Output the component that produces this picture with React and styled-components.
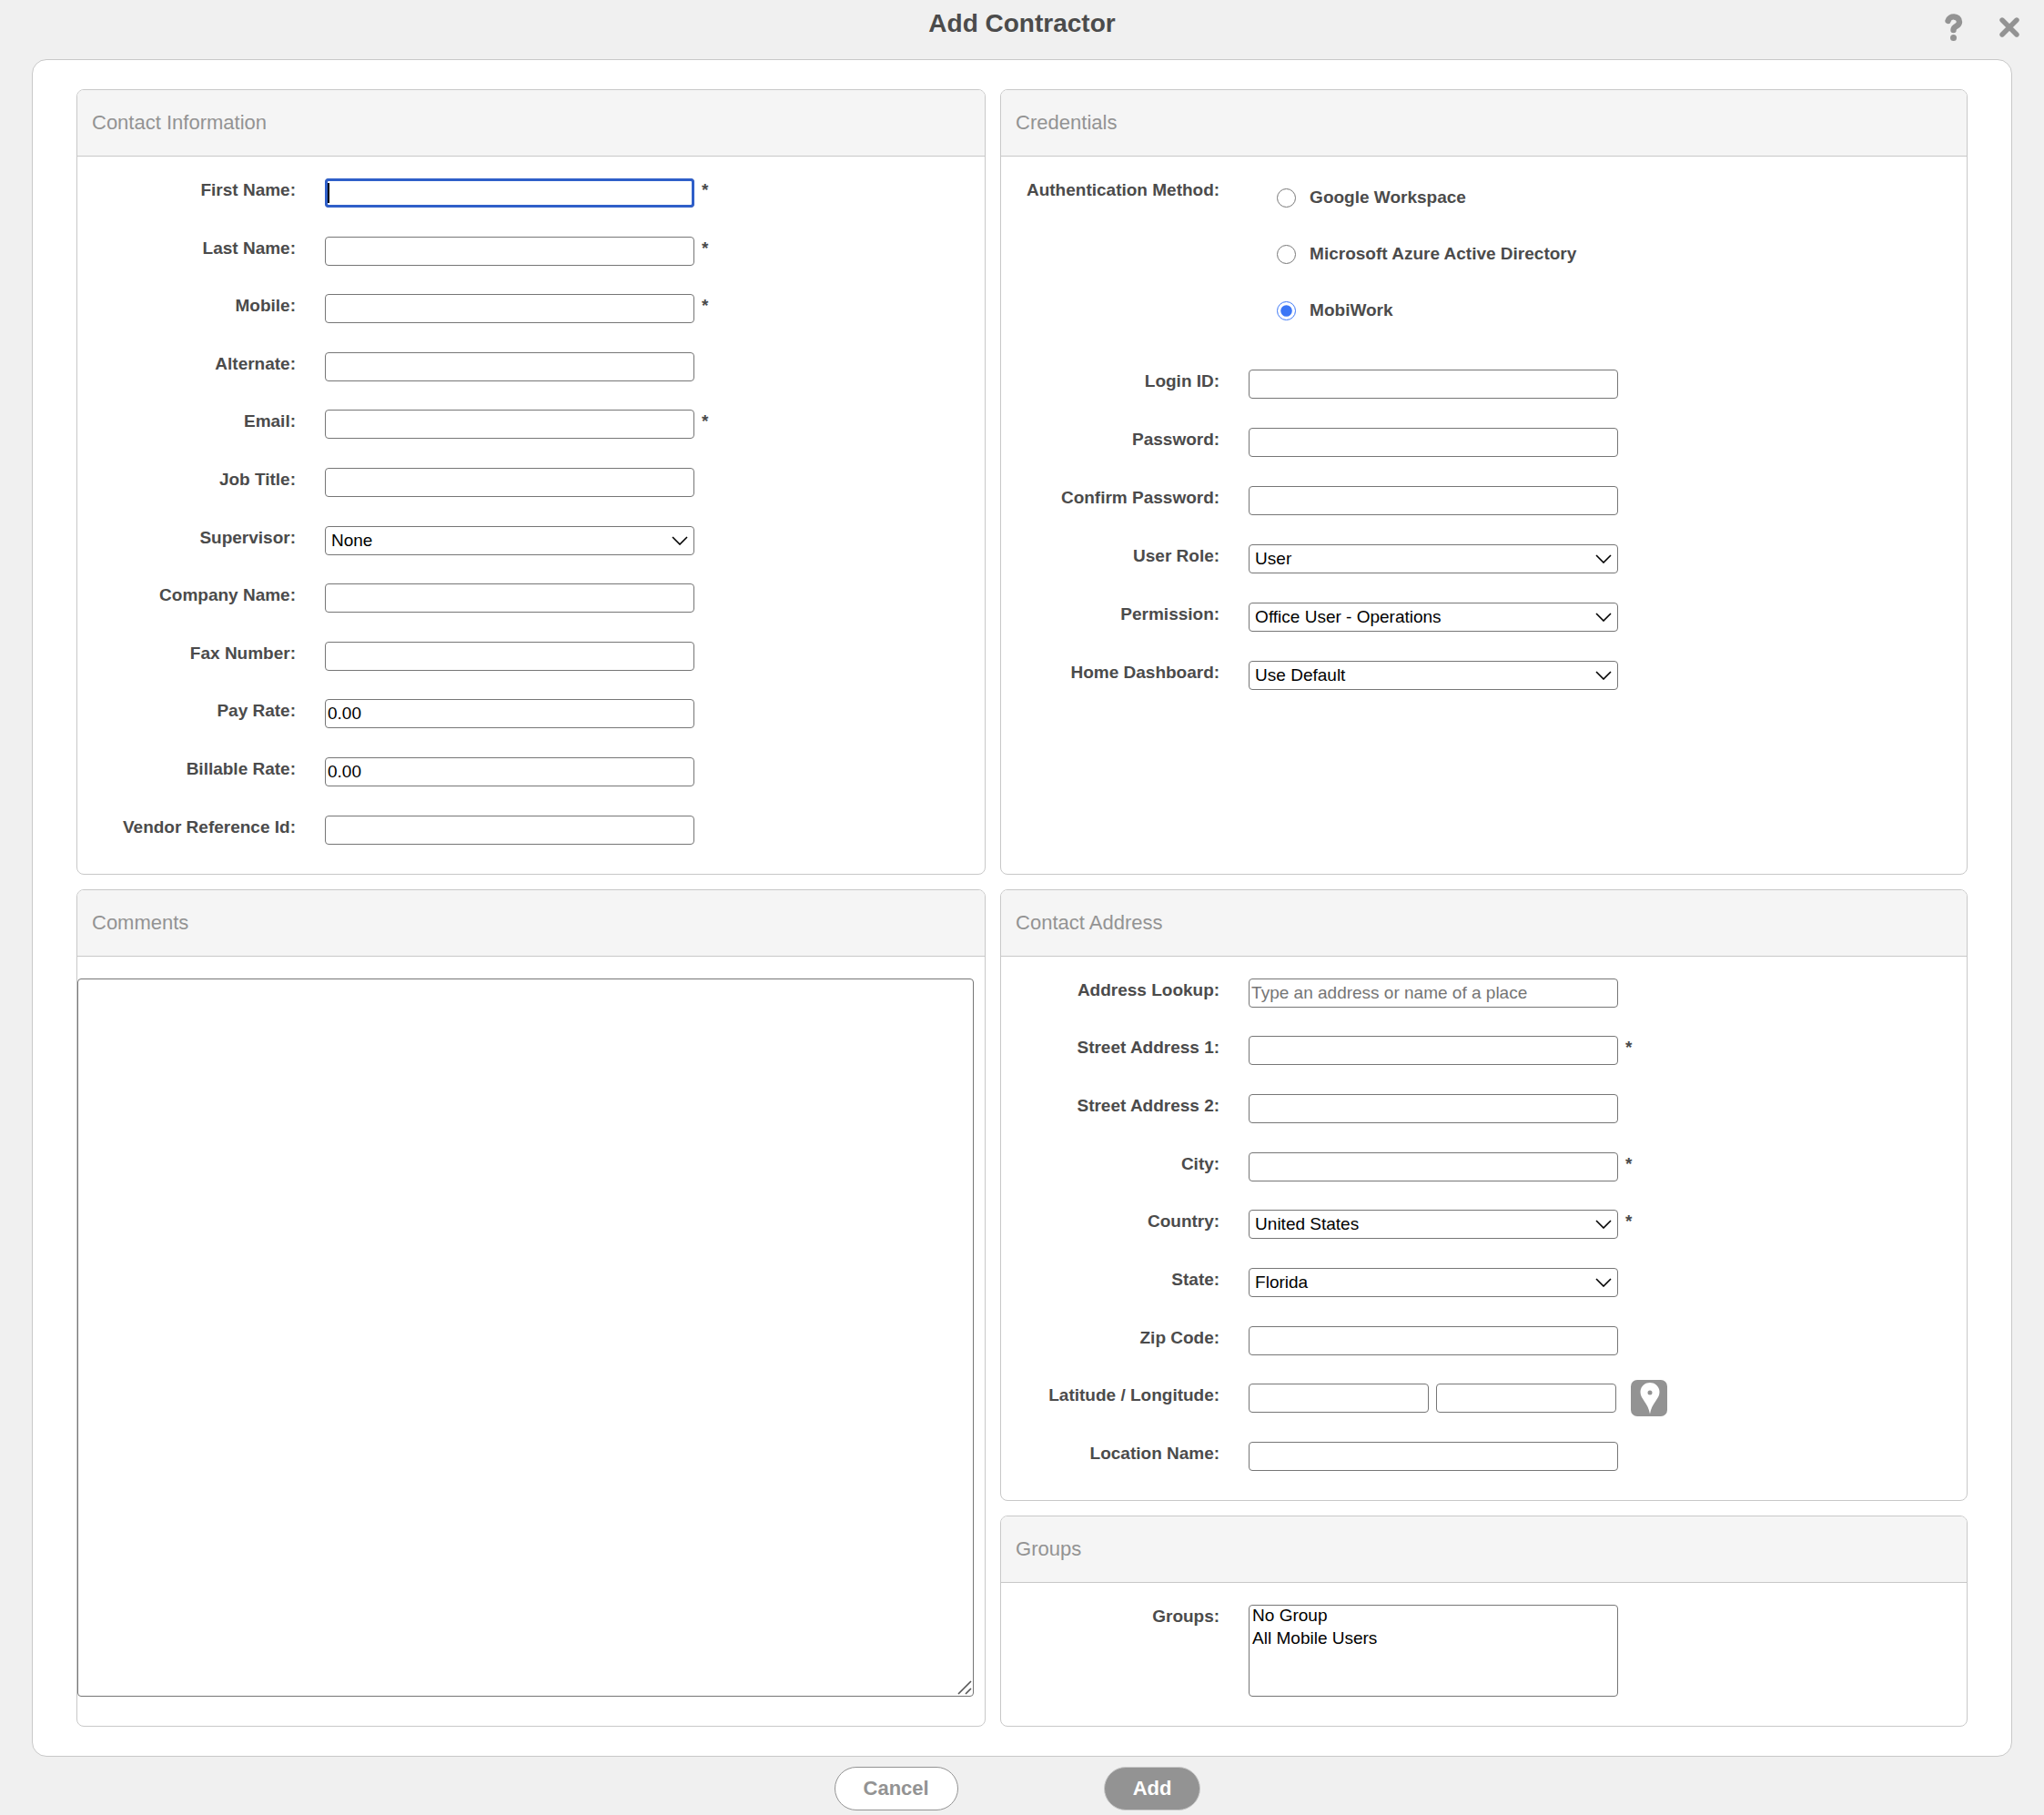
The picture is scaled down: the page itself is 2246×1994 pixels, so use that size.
import { useState } from 'react';
import styled, { createGlobalStyle } from 'styled-components';

const text = '#4b4b4b';
const gray = '#939393';
const line = '#c8c8c8';
const controlLine = '#767676';

const contactFields = [
  { id: 'firstName', label: 'First Name', required: true, focused: true },
  { id: 'lastName', label: 'Last Name', required: true },
  { id: 'mobile', label: 'Mobile', required: true },
  { id: 'alternate', label: 'Alternate' },
  { id: 'email', label: 'Email', required: true },
  { id: 'jobTitle', label: 'Job Title' },
  { id: 'supervisor', label: 'Supervisor', options: ['None'] },
  { id: 'companyName', label: 'Company Name' },
  { id: 'faxNumber', label: 'Fax Number' },
  { id: 'payRate', label: 'Pay Rate', value: '0.00' },
  { id: 'billableRate', label: 'Billable Rate', value: '0.00' },
  { id: 'vendorReferenceId', label: 'Vendor Reference Id' },
];

const credentialFields = [
  { id: 'loginId', label: 'Login ID' },
  { id: 'password', label: 'Password', type: 'password' },
  { id: 'confirmPassword', label: 'Confirm Password', type: 'password' },
  { id: 'userRole', label: 'User Role', options: ['User'] },
  { id: 'permission', label: 'Permission', options: ['Office User - Operations'] },
  { id: 'homeDashboard', label: 'Home Dashboard', options: ['Use Default'] },
];

const addressFields = [
  { id: 'addressLookup', label: 'Address Lookup', placeholder: 'Type an address or name of a place' },
  { id: 'street1', label: 'Street Address 1', required: true },
  { id: 'street2', label: 'Street Address 2' },
  { id: 'city', label: 'City', required: true },
  { id: 'country', label: 'Country', options: ['United States'], required: true },
  { id: 'state', label: 'State', options: ['Florida'] },
  { id: 'zipCode', label: 'Zip Code' },
];

const authMethods = ['Google Workspace', 'Microsoft Azure Active Directory', 'MobiWork'];

const Field = ({ id, label, type = 'text', value, placeholder, options, required, focused }) => (
  <Row>
    <Label htmlFor={id}>{label}:</Label>
    {options ? (
      <SelectBox>
        <Select id={id}>
          {options.map(option => (
            <option key={option}>{option}</option>
          ))}
        </Select>
        <Chevron viewBox='0 0 18 10' aria-hidden='true'>
          <path d='M1 1L9 9L17 1' />
        </Chevron>
      </SelectBox>
    ) : (
      <InputBox>
        <Input id={id} type={type} defaultValue={value} placeholder={placeholder || ' '} autoFocus={focused} />
        <Caret />
      </InputBox>
    )}
    {required && <Required>*</Required>}
  </Row>
);

const App = () => {
  const [authMethod, setAuthMethod] = useState('MobiWork');

  return (
    <Page onSubmit={e => e.preventDefault()}>
      <GlobalStyle />
      <TitleBar>
        <Title>Add Contractor</Title>
        <TitleActions>
          <IconButton type='button' aria-label='Help'>
            <svg width='20' height='30' viewBox='0 0 20 30'>
              <path
                d='M3.500 8C5 1.500 16 2 16 9C16 14.500 9.500 13 9.500 18'
                fill='none'
                stroke={gray}
                strokeWidth='6.400'
                strokeLinecap='round'
              />
              <circle cx='9.500' cy='26.500' r='3.500' fill={gray} />
            </svg>
          </IconButton>
          <IconButton type='button' aria-label='Close'>
            <svg width='22' height='22' viewBox='0 0 22 22'>
              <path d='M3 3L19 19M19 3L3 19' fill='none' stroke={gray} strokeWidth='5.400' strokeLinecap='round' />
            </svg>
          </IconButton>
        </TitleActions>
      </TitleBar>

      <Sheet>
        <Section>
          <SectionTitle>Contact Information</SectionTitle>
          <Fields $spread>
            {contactFields.map(field => (
              <Field key={field.id} {...field} />
            ))}
          </Fields>
        </Section>

        <Section>
          <SectionTitle>Credentials</SectionTitle>
          <Fields>
            <Row>
              <Label as='span' id='authLabel'>
                Authentication Method:
              </Label>
              <RadioGroup role='radiogroup' aria-labelledby='authLabel'>
                {authMethods.map(method => (
                  <RadioLabel key={method}>
                    <Radio
                      type='radio'
                      name='authMethod'
                      checked={authMethod === method}
                      onChange={() => setAuthMethod(method)}
                    />
                    {method}
                  </RadioLabel>
                ))}
              </RadioGroup>
            </Row>
            {credentialFields.map(field => (
              <Field key={field.id} {...field} />
            ))}
          </Fields>
        </Section>

        <Section>
          <SectionTitle id='commentsTitle'>Comments</SectionTitle>
          <CommentsBody>
            <Comments aria-labelledby='commentsTitle' />
            <Grip viewBox='0 0 16 16' aria-hidden='true'>
              <path d='M1 15L15 1M9 15L15 9' />
            </Grip>
          </CommentsBody>
        </Section>

        <Stack>
          <Section $grow>
            <SectionTitle>Contact Address</SectionTitle>
            <Fields $spread>
              {addressFields.map(field => (
                <Field key={field.id} {...field} />
              ))}
              <Row>
                <Label htmlFor='latitude'>Latitude / Longitude:</Label>
                <Coordinates>
                  <Input id='latitude' $short />
                  <Input aria-label='Longitude' $short />
                  <PinButton type='button' aria-label='Show on map'>
                    <svg width='40' height='40' viewBox='0 0 40 40'>
                      <rect width='40' height='40' rx='7' fill={gray} />
                      <path
                        fillRule='evenodd'
                        fill='#fff'
                        d='M21 3C15 3 10.500 7.500 10.500 13.500C10.500 21 19 25 21 37.500C23 25 31.500 21 31.500 13.500C31.500 7.500 27 3 21 3ZM21 11.500A2.500 2.500 0 1 1 21 16.500A2.500 2.500 0 1 1 21 11.500Z'
                      />
                    </svg>
                  </PinButton>
                </Coordinates>
              </Row>
              <Field id='locationName' label='Location Name' />
            </Fields>
          </Section>

          <Section>
            <SectionTitle>Groups</SectionTitle>
            <Fields>
              <Row>
                <Label htmlFor='groups'>Groups:</Label>
                <GroupList id='groups' multiple size={4}>
                  <option>No Group</option>
                  <option>All Mobile Users</option>
                </GroupList>
              </Row>
            </Fields>
          </Section>
        </Stack>
      </Sheet>

      <Footer>
        <Button type='button'>Cancel</Button>
        <Button type='submit' $primary>
          Add
        </Button>
      </Footer>
    </Page>
  );
};

export default App;

const GlobalStyle = createGlobalStyle`
  * {
    box-sizing: border-box;
  }
  body {
    margin: 0;
    color: ${text};
    background-color: #f0f0f0;
    font: 19px/26px 'Liberation Sans', Arial, sans-serif;
  }
  button, input, select, textarea {
    margin: 0;
    font: inherit;
  }
`;

const Page = styled.form`
  display: flex;
  flex-direction: column;
  min-height: 100vh;
`;

const TitleBar = styled.header`
  display: grid;
  grid-template-columns: 1fr auto 1fr;
  padding: 10px 27px 15px;
`;

const Title = styled.h1`
  grid-column: 2;
  margin: 0;
  font-size: 28px;
  line-height: 32px;
`;

const TitleActions = styled.div`
  display: flex;
  justify-content: flex-end;
  align-items: center;
  gap: 40px;
  height: 40px;
`;

const IconButton = styled.button`
  display: flex;
  padding: 0;
  border: 0;
  background: none;
  cursor: pointer;
`;

const Sheet = styled.main`
  display: grid;
  grid-template-columns: 47fr 50fr;
  grid-template-rows: 15fr 16fr;
  gap: 16px;
  flex: 1;
  margin: 0 35px;
  padding: 32px 48px;
  border: 1px solid ${line};
  border-radius: 16px;
  background-color: #fff;
`;

const Section = styled.section`
  display: flex;
  flex-direction: column;
  flex-grow: ${({ $grow }) => ($grow ? 1 : 0)};
  border: 1px solid ${line};
  border-radius: 8px;
  overflow: hidden;
`;

const Stack = styled.div`
  display: flex;
  flex-direction: column;
  gap: 16px;
`;

const SectionTitle = styled.h2`
  margin: 0;
  padding: 24px 16px;
  border-bottom: 1px solid ${line};
  background-color: #f5f5f5;
  color: ${gray};
  font-size: 22px;
  font-weight: 300;
  line-height: 24px;
`;

const Fields = styled.div`
  display: flex;
  flex-direction: column;
  flex: 1;
  justify-content: ${({ $spread }) => ($spread ? 'space-between' : 'flex-start')};
  gap: ${({ $spread }) => ($spread ? '31px' : '32px')};
  padding: 24px 0 32px;
`;

const Row = styled.div`
  display: flex;
  align-items: flex-start;
`;

const Label = styled.label`
  width: 240px;
  margin-right: 32px;
  font-weight: bold;
  text-align: right;
`;

const Required = styled.span`
  margin-left: 8px;
  font-weight: bold;
`;

const InputBox = styled.div`
  position: relative;
  height: 32px;
`;

const Caret = styled.span`
  display: none;
  position: absolute;
  top: 5px;
  left: 3px;
  width: 2px;
  height: 22px;
  background-color: #000;
`;

const Input = styled.input`
  display: block;
  width: ${({ $short }) => ($short ? '198px' : '406px')};
  height: 32px;
  padding: 0 2px;
  border: 1px solid ${controlLine};
  border-radius: 4px;
  background-color: #fff;
  color: #000;

  &::placeholder {
    color: #757575;
  }

  &:focus {
    outline: 3px solid #2f5fc9;
    outline-offset: -3px;
  }

  &:focus:placeholder-shown {
    caret-color: transparent;
  }

  &:focus:placeholder-shown + ${Caret} {
    display: block;
  }
`;

const SelectBox = styled.div`
  position: relative;
  height: 32px;
`;

const Select = styled.select`
  display: block;
  width: 406px;
  height: 32px;
  padding: 0 32px 0 6px;
  border: 1px solid ${controlLine};
  border-radius: 4px;
  background-color: #fff;
  color: #000;
  appearance: none;
`;

const Chevron = styled.svg`
  position: absolute;
  top: 11px;
  right: 7px;
  width: 18px;
  height: 10px;
  fill: none;
  stroke: #000;
  stroke-width: 1.6;
  pointer-events: none;
`;

const RadioGroup = styled.div`
  display: flex;
  flex-direction: column;
  gap: 20px;
  padding: 0 0 12px 31px;
`;

const RadioLabel = styled.label`
  display: flex;
  align-items: center;
  gap: 15px;
  height: 42px;
  font-weight: bold;
`;

const Radio = styled.input`
  width: 21px;
  height: 21px;
  accent-color: #3b76f6;
`;

const Coordinates = styled.div`
  display: flex;
  align-items: center;
  gap: 8px;
  height: 32px;
`;

const PinButton = styled.button`
  display: flex;
  margin-left: 8px;
  padding: 0;
  border: 0;
  background: none;
  cursor: pointer;
`;

const CommentsBody = styled.div`
  display: flex;
  flex: 1;
  position: relative;
  padding: 24px 12px 32px 0;
`;

const Comments = styled.textarea`
  flex: 1;
  padding: 2px;
  border: 1px solid ${controlLine};
  border-radius: 4px;
  background-color: #fff;
  color: #000;
  resize: vertical;

  &::-webkit-resizer {
    background-color: transparent;
  }
`;

const Grip = styled.svg`
  position: absolute;
  right: 14px;
  bottom: 34px;
  width: 16px;
  height: 16px;
  fill: none;
  stroke: #555;
  stroke-width: 1.6;
  pointer-events: none;
`;

const GroupList = styled.select`
  width: 406px;
  height: 101px;
  padding: 0;
  border: 1px solid ${controlLine};
  border-radius: 4px;
  background-color: #fff;
  color: #000;

  option {
    min-height: 25px;
    padding: 0 3px 1px;
    line-height: 24px;
  }
`;

const Footer = styled.footer`
  display: flex;
  justify-content: center;
  gap: 160px;
  padding: 11px 10px 5px 0;
`;

const Button = styled.button`
  height: 48px;
  padding: 0 31px;
  border: 1px solid ${({ $primary }) => ($primary ? line : gray)};
  border-radius: 24px;
  background-color: ${({ $primary }) => ($primary ? gray : '#fff')};
  color: ${({ $primary }) => ($primary ? '#fff' : gray)};
  font-size: 22px;
  font-weight: bold;
  cursor: pointer;
`;
